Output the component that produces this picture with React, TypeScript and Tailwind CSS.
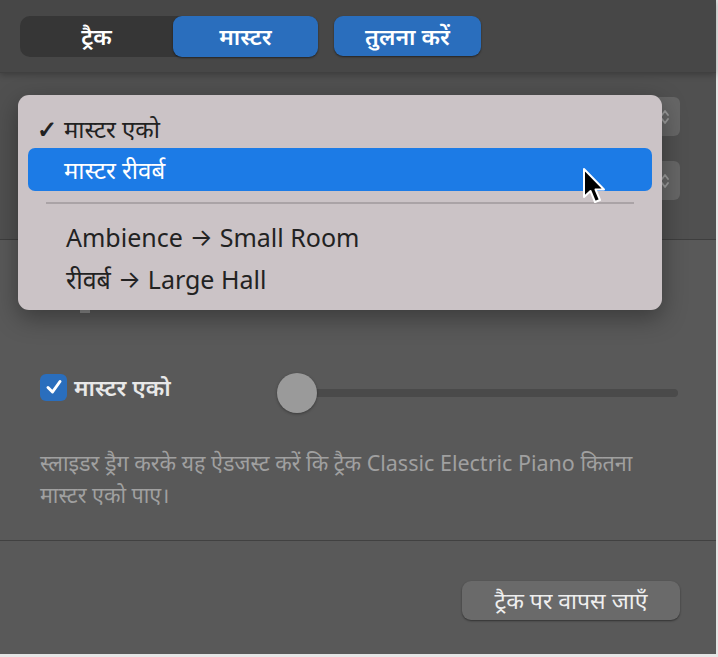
import React from 'react';

const font = { fontFamily: "'Noto Sans', 'Liberation Sans', sans-serif" };

function Stepper() {
  return (
    <div className="w-[40px] h-[39px] rounded-md bg-[#666666] flex items-center justify-end pr-[10px]">
      <svg width="10" height="20" viewBox="0 0 10 20" fill="none" stroke="#9c9c9c" strokeWidth="1.8" strokeLinecap="round" strokeLinejoin="round">
        <path d="M2 8 L5 4 L8 8" />
        <path d="M2 12 L5 16 L8 12" />
      </svg>
    </div>
  );
}

function Cursor() {
  return (
    <svg width="26" height="40" viewBox="0 0 26 40" className="absolute left-[581px] top-[167px] z-30">
      <path d="M3 2 L3 30 L9.5 24 L14 35 L19 33 L14.5 22.5 L23 22.5 Z" fill="#000" stroke="#fff" strokeWidth="2" strokeLinejoin="round" />
    </svg>
  );
}

function Arrow() {
  return <span style={{ fontFamily: "Inter, 'DejaVu Sans', sans-serif" }} className="mx-[7px] text-[24px]">→</span>;
}

export default function App() {
  return (
    <div className="w-[718px] h-[657px] bg-[#e6e6e6] overflow-hidden" style={font}>
      <div className="relative w-[716px] h-[654px] bg-[#595959] flex flex-col">
        {/* Header tabs */}
        <div className="h-[73px] bg-[#474747] flex items-start pl-[20px] pt-[16px] gap-[16px] border-b border-[#404040] shadow-[0_2px_6px_rgba(0,0,0,0.25)] z-10">
          <div className="flex h-[41px] rounded-[10px] bg-[#363636]">
            <button className="w-[153px] text-[23px] font-semibold text-white">ट्रैक</button>
            <button className="w-[145px] rounded-[9px] bg-[#2a6ebd] text-[23px] font-semibold text-white shadow-[0_1px_2px_rgba(0,0,0,0.5)]">मास्टर</button>
          </div>
          <button className="w-[147px] h-[40px] rounded-[9px] bg-[#2a6ebd] text-[23px] font-semibold text-white shadow-[0_1px_2px_rgba(0,0,0,0.5)]">तुलना करें</button>
        </div>

        {/* Plug-in popups */}
        <div className="h-[167px] bg-[#505050] border-b border-[#3e3e3e] flex flex-col items-end pr-[36px] pt-[24px] gap-[25px]">
          <Stepper />
          <Stepper />
        </div>

        {/* Level */}
        <div className="flex-1 flex flex-col px-[40px]">
          <div className="h-[62px] relative">
            <div className="absolute left-[40px] top-[64px] w-[18px] h-[14px]">
              <div className="w-[8px] h-[6px] bg-[#111] rounded-sm ml-[8px]" />
              <div className="w-[10px] h-[4px] bg-[#8a8a8a] -mt-[1px]" />
            </div>
          </div>
          <div className="flex items-center h-[54px] mt-[64px]">
            <div className="shrink-0 w-[27px] h-[27px] rounded-[6px] bg-[#2a6ebd] flex items-center justify-center -mt-[12px]">
              <svg width="20" height="20" viewBox="0 0 20 20" fill="none" stroke="#fff" strokeWidth="3" strokeLinecap="round" strokeLinejoin="round">
                <path d="M4 10.5 L8.5 15 L16 4.5" />
              </svg>
            </div>
            <span className="w-[131px] shrink-0 whitespace-nowrap ml-[7px] text-[23px] font-semibold text-[#e8e8e8] -mt-[12px]">मास्टर एको</span>
            <div className="shrink-0 ml-[72px] w-[401px] relative h-[40px] flex items-center">
              <div className="absolute left-[20px] right-0 h-[8px] rounded-full bg-[#4a4a4a]" />
              <div className="relative w-[40px] h-[40px] rounded-full bg-[#9a9a9a] shadow-[0_1px_3px_rgba(0,0,0,0.35)]" />
            </div>
          </div>
          <p className="mt-[27px] w-[632px] text-[21.5px] leading-[32px] text-[#a0a0a0]">
            स्लाइडर ड्रैग करके यह ऐडजस्ट करें कि ट्रैक Classic Electric Piano कितना मास्टर एको पाए।
          </p>
        </div>

        {/* Footer */}
        <div className="h-[114px] border-t border-[#414141] flex justify-end items-start pr-[36px] pt-[40px]">
          <button className="w-[218px] h-[39px] rounded-[9px] bg-[#6a6a6a] text-[23px] text-[#eeeeee] shadow-[0_1px_2px_rgba(0,0,0,0.45)]">ट्रैक पर वापस जाएँ</button>
        </div>

        {/* Popup menu */}
        <div className="absolute left-[18px] top-[95px] w-[644px] h-[215px] rounded-[11px] bg-[#cbc3c6] shadow-[0_8px_24px_rgba(0,0,0,0.35)] px-[10px] pt-[16px] z-20">
          <div className="h-[36px] flex items-center text-[24px] text-[#222]">
            <span className="w-[36px] pl-[9px] text-[24px] font-bold">✓</span>
            <span>मास्टर एको</span>
          </div>
          <div className="mt-[1px] h-[43px] rounded-[7px] bg-[#1c7be6] flex items-center pl-[36px] text-[24px] text-white">मास्टर रीवर्ब</div>
          <div className="mx-[18px] mt-[11px] h-[2px] bg-[#aaa3a6]" />
          <div className="mt-[13px] h-[42px] flex items-center pl-[38px] text-[25px] text-[#222]">Ambience<Arrow />Small Room</div>
          <div className="h-[42px] flex items-center pl-[38px] text-[25px] text-[#222]">रीवर्ब<Arrow />Large Hall</div>
        </div>
        <Cursor />
      </div>
    </div>
  );
}
